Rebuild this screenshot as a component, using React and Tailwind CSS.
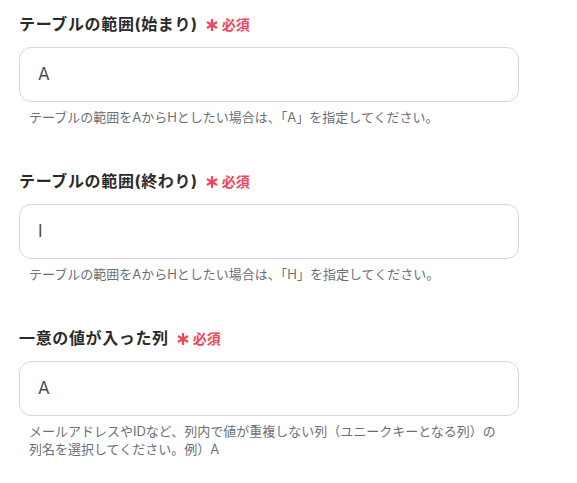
const fields = [
  {
    label: "テーブルの範囲(始まり)",
    value: "A",
    help: "テーブルの範囲をAからHとしたい場合は、「A」を指定してください。",
  },
  {
    label: "テーブルの範囲(終わり)",
    value: "I",
    help: "テーブルの範囲をAからHとしたい場合は、「H」を指定してください。",
  },
  {
    label: "一意の値が入った列",
    value: "A",
    help: "メールアドレスやIDなど、列内で値が重複しない列（ユニークキーとなる列）の列名を選択してください。例）A",
  },
];

function Asterisk() {
  return (
    <svg width="12" height="12" viewBox="0 0 12 12" className="text-[#f0455b]">
      <g stroke="currentColor" strokeWidth="2.2" strokeLinecap="round">
        <line x1="6" y1="1" x2="6" y2="11" />
        <line x1="1.7" y1="3.5" x2="10.3" y2="8.5" />
        <line x1="1.7" y1="8.5" x2="10.3" y2="3.5" />
      </g>
    </svg>
  );
}

export default function App() {
  return (
    <div className="min-h-screen bg-white pl-[19px] pr-[58px] pt-[11px] [font-family:Inter,'Noto_Sans_CJK_JP',sans-serif]">
      <div className="flex flex-col gap-[42px]">
        {fields.map((f, i) => (
          <div key={i}>
            {/* Label */}
            <div className="flex items-center h-[26px]">
              <span className="text-[16px] font-bold tracking-[0.04em] text-[#2b2b2b]">{f.label}</span>
              <span className="ml-[8px] mt-[1px]">
                <Asterisk />
              </span>
              <span className="ml-[4px] text-[14px] font-bold text-[#f0455b]">必須</span>
            </div>
            {/* Input */}
            <div className="mt-[10px] h-[55px] rounded-[12px] border border-[#d4d7dd] flex items-center px-[18px]">
              <span className="text-[17px] text-[#4a4f57]">{f.value}</span>
            </div>
            {/* Help */}
            <p className="mt-[6px] pl-[10px] pr-[18px] text-[13px] leading-[18px] text-[#6b6f76]">{f.help}</p>
          </div>
        ))}
      </div>
    </div>
  );
}
